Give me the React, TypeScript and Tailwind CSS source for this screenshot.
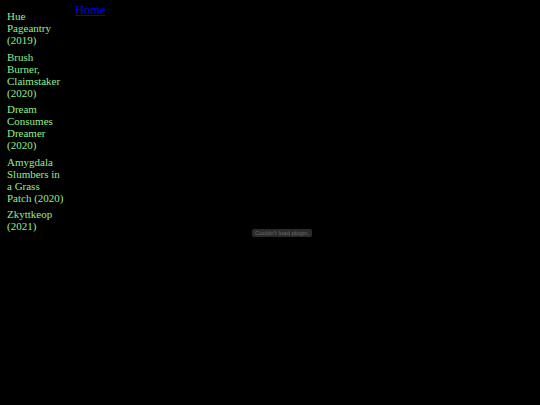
import React from "react";

const works = [
  "Hue Pageantry (2019)",
  "Brush Burner, Claimstaker (2020)",
  "Dream Consumes Dreamer (2020)",
  "Amygdala Slumbers in a Grass Patch (2020)",
  "Zkyttkeop (2021)",
];

const App: React.FC = () => {
  return (
    <div className="min-h-[405px] w-full bg-black flex font-['Liberation_Serif',serif]">
      <ul className="w-[75px] shrink-0 pl-[7px] pt-[10px] flex flex-col gap-[4.5px]">
        {works.map((w) => (
          <li key={w} className="w-[58px] text-[11px] leading-[12px] text-[#90ee90]">
            {w}
          </li>
        ))}
      </ul>
      <div className="flex-1 flex flex-col">
        <a href="#" className="text-[12.5px] leading-[14px] text-[#0000ee] underline pt-[3px] w-fit">
          Home
        </a>
        <div className="mt-[212px] ml-[177px] w-[60px] h-[8px] rounded-[2px] bg-[#2b2b2b] flex items-center justify-center">
          <span className="text-[6px] leading-[8px] text-[#6a6a6a] font-['Liberation_Sans',sans-serif] whitespace-nowrap">
            Couldn't load plugin.
          </span>
        </div>
      </div>
    </div>
  );
};

export default App;
